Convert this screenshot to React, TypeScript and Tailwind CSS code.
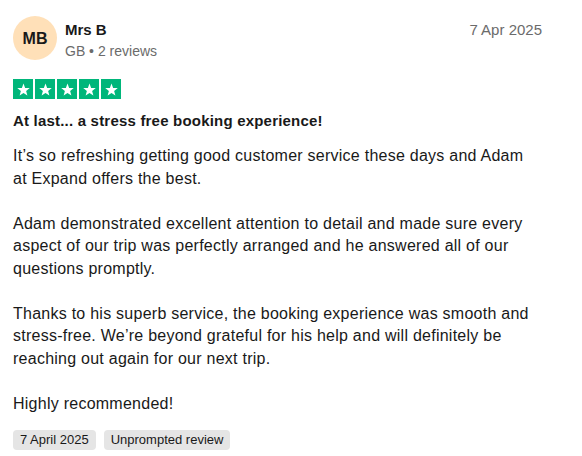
export default function App() {
  const font = { fontFamily: '"Liberation Sans", Arial, sans-serif' }
  return (
    <div className="min-h-screen bg-white text-[#191919]" style={font}>
      <div className="w-[555px] px-[13px] pt-[16px]">
        <div className="flex items-start">
          <div className="flex h-[44px] w-[44px] shrink-0 items-center justify-center rounded-full bg-[#ffe0b8] pt-[2px] text-[16px] font-semibold text-[#191919]">
            MB
          </div>
          <div className="ml-[8px] flex-1 pt-[3px]">
            <div className="text-[15px] font-semibold leading-[22px]">Mrs B</div>
            <div className="text-[14px] leading-[20px] text-[#6b6b6b]">GB • 2 reviews</div>
          </div>
          <div className="pt-[4px] text-[15px] leading-[20px] text-[#6b6b6b]">7 Apr 2025</div>
        </div>

        <div className="mt-[18px] flex gap-[2px]">
          {[0, 1, 2, 3, 4].map((i) => (
            <div key={i} className="flex h-[20px] w-[20px] items-center justify-center bg-[#00b67a]">
              <svg width="15" height="15" viewBox="0 0 24 24">
                <path
                  d="M12 2.5l2.6 6.9 7.4.3-5.8 4.6 2 7.2L12 17.4 5.8 21.5l2-7.2L2 9.7l7.4-.3z"
                  fill="#fff"
                />
              </svg>
            </div>
          ))}
        </div>

        <h2 className="mt-[11px] text-[15px] font-bold leading-[22px] tracking-[0.2px]">
          At last... a stress free booking experience!
        </h2>

        <div className="w-[522px]">
          <p className="mt-[13px] text-[16px] leading-[22.5px] tracking-[0.25px]">
            It’s so refreshing getting good customer service these days and Adam at Expand offers the best.
            <br />
            <br />
            Adam demonstrated excellent attention to detail and made sure every aspect of our trip was perfectly
            arranged and he answered all of our questions promptly.
            <br />
            <br />
            Thanks to his superb service, the booking experience was smooth and stress-free. We’re beyond grateful for
            his help and will definitely be reaching out again for our next trip.
            <br />
            <br />
            Highly recommended!
          </p>
        </div>

        <div className="mt-[15px] flex gap-[8px]">
          <span className="rounded-[4px] bg-[#e5e5e5] px-[7px] text-[13px] leading-[20px]">7 April 2025</span>
          <span className="rounded-[4px] bg-[#e5e5e5] px-[7px] text-[13px] leading-[20px]">Unprompted review</span>
        </div>
      </div>
    </div>
  )
}
